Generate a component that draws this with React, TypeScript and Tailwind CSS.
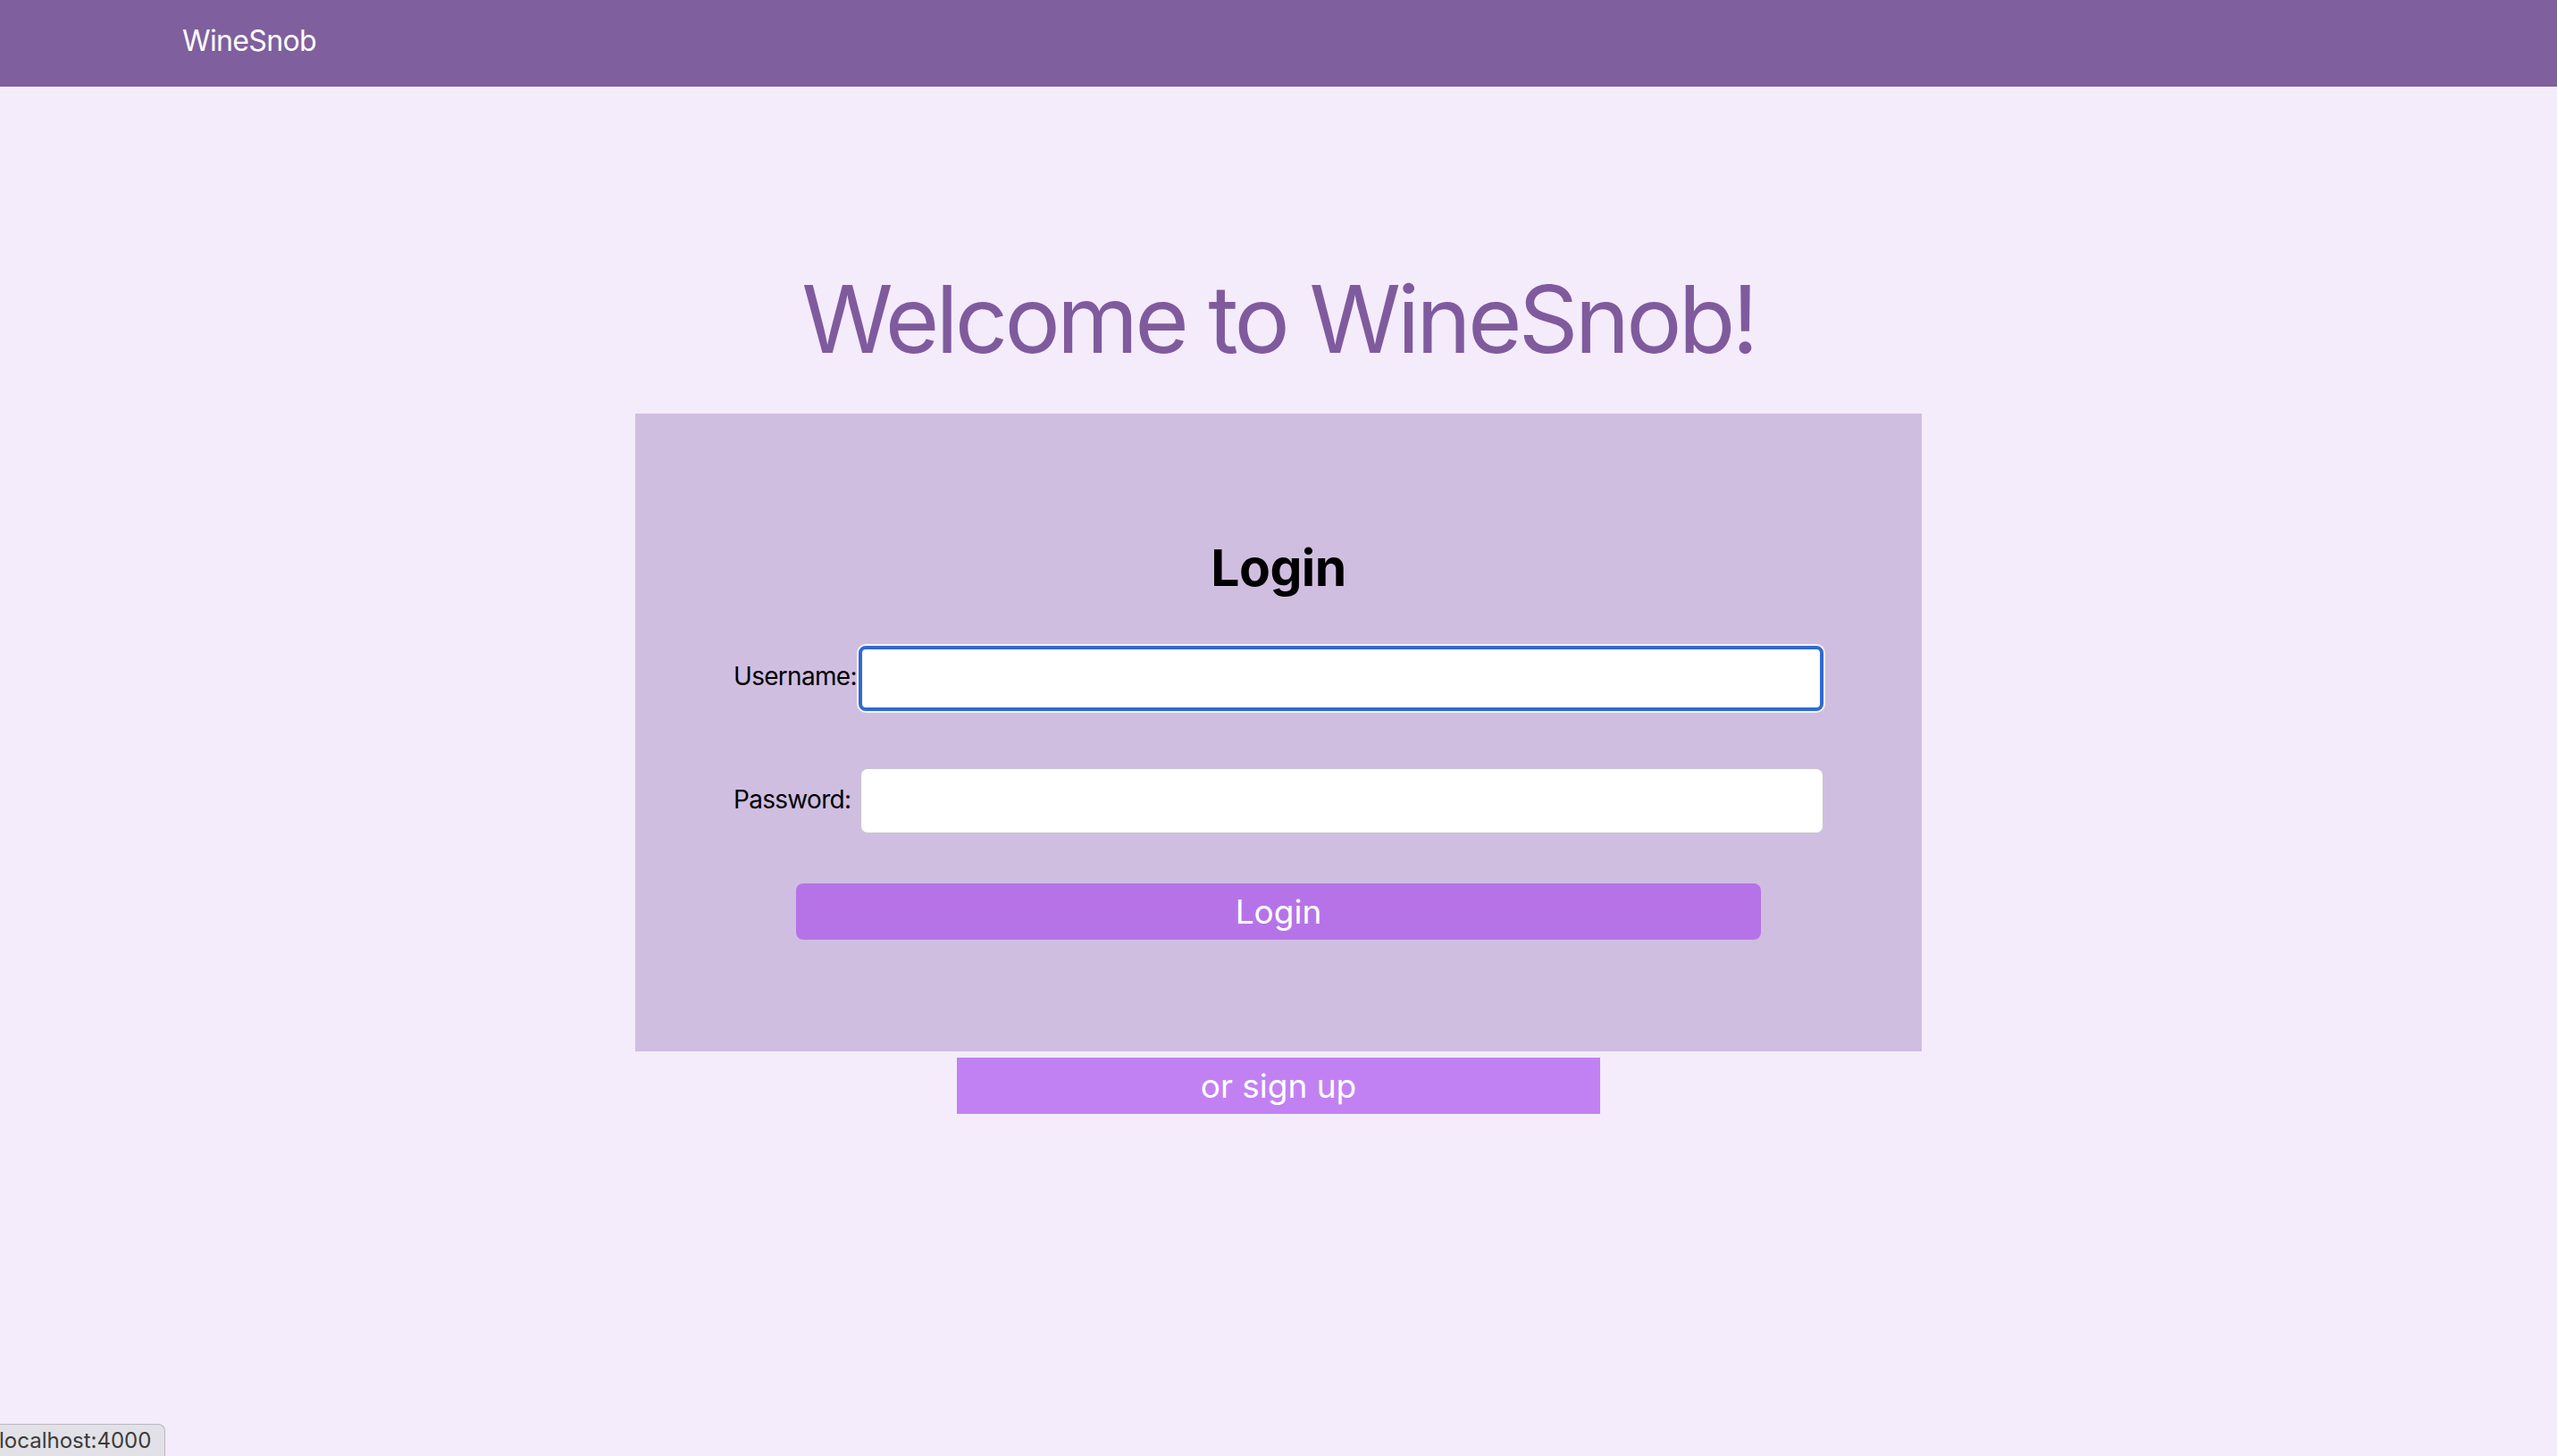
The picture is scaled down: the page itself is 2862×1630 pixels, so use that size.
import React from "react";

export default function App() {
  return (
    <div
      className="min-h-[1630px] w-full bg-[#f4ebfb] relative"
      style={{ fontFamily: "Inter, 'Noto Sans', sans-serif" }}
    >
      <nav className="h-[97px] bg-[#7f5f9e] flex items-center pl-[204px] pb-[6px]">
        <span className="text-white text-[32px] leading-none tracking-[-0.02em]">WineSnob</span>
      </nav>

      <main className="flex flex-col items-center">
        <h1 className="mt-[208px] text-[104px] leading-[104px] text-[#7f5b9e] tracking-[-0.037em]">
          Welcome to WineSnob!
        </h1>

        <div className="mt-[54px] w-[1440px] bg-[#d0bee0] px-[110px] pt-[144px] pb-[125px] flex flex-col items-center">
          <h2 className="text-[57px] leading-[58px] font-bold text-black tracking-[-0.01em]">Login</h2>

          <div className="mt-[58px] w-full grid grid-cols-[140px_1fr] items-center">
            <label className="text-[28px] text-black whitespace-nowrap tracking-[-0.025em] mb-[6px]">Username:</label>
            <input
              type="text"
              className="h-[73px] bg-white rounded-[8px] border-[4px] border-[#2f6ad0] shadow-[0_0_0_2px_rgba(255,255,255,0.8)] outline-none"
            />
          </div>

          <div className="mt-[64px] w-full grid grid-cols-[142px_1fr] items-center">
            <label className="text-[28px] text-black whitespace-nowrap tracking-[-0.025em] mb-[4px]">Password:</label>
            <input
              type="password"
              className="h-[73px] bg-white rounded-[8px] border border-[#c9c4cc] outline-none"
            />
          </div>

          <button className="mt-[56px] w-[1080px] h-[63px] rounded-[8px] bg-[#b673e8] text-white text-[37px]">
            Login
          </button>
        </div>

        <button className="mt-[7px] w-[720px] h-[63px] bg-[#c281f3] text-white text-[37px]">
          or sign up
        </button>
      </main>

      <div className="absolute left-0 bottom-0 h-[36px] w-[185px] bg-[#e2e1e7] border-t border-r border-[#bdb7c2] rounded-tr-[8px] flex items-center overflow-hidden">
        <span className="text-[24px] text-[#3a3a3a] leading-none -ml-[1px]">localhost:4000</span>
      </div>
    </div>
  );
}
